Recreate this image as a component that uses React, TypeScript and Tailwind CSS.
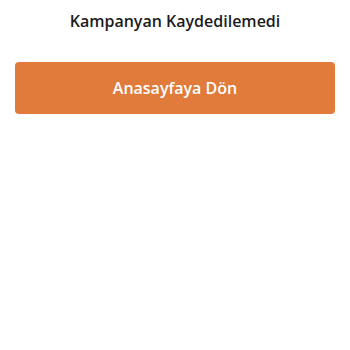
export default function App() {
  return (
    <div className="w-[350px] h-[350px] bg-white flex flex-col items-center" style={{ fontFamily: '"Open Sans", "Noto Sans", sans-serif' }}>
      <h1 className="mt-[9px] h-[24px] leading-[24px] text-[16px] font-semibold text-[#1c1c1c]">Kampanyan Kaydedilemedi</h1>
      <button className="mt-[29px] w-[320px] h-[52px] rounded-[4px] bg-[#e07b3b] text-white text-[16px] font-semibold flex items-center justify-center">
        Anasayfaya Dön
      </button>
    </div>
  );
}
